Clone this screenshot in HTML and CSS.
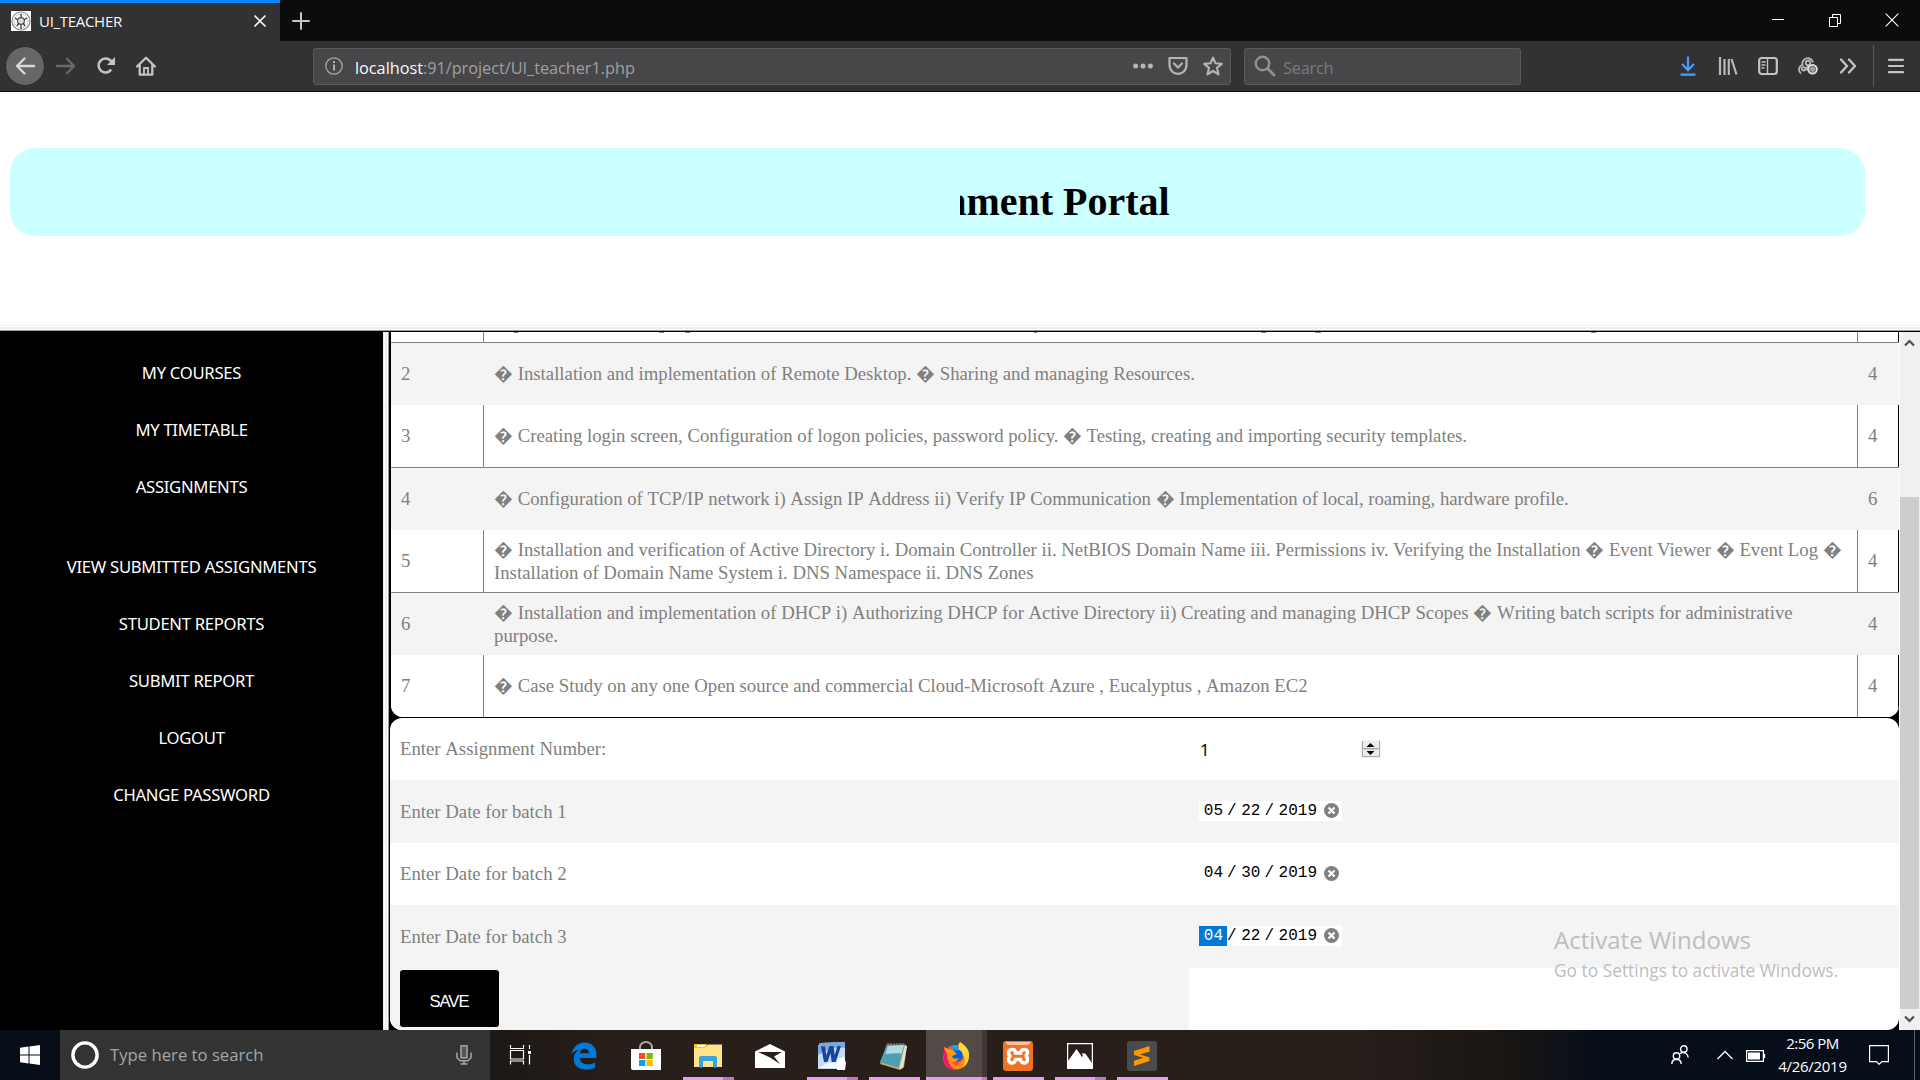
FILE: index.html
```html
<!DOCTYPE html>
<html lang="en">
<head>
<meta charset="utf-8">
<title>UI_TEACHER</title>
<link rel="stylesheet" href="styles.css">
</head>
<body>
<header class="tabs">
  <div class="tab">
    <svg class="favicon" width="20" height="20" viewBox="0 0 20 20"><rect width="20" height="20" fill="#fff"/><circle cx="10" cy="10" r="9" fill="none" stroke="#888" stroke-width="1.2"/><circle cx="10" cy="10" r="7" fill="none" stroke="#aaa" stroke-dasharray="1.5 1"/><circle cx="10" cy="10" r="3.4" fill="#ddd" stroke="#555" stroke-width="1.2"/><path d="M10 3v4M4 7l3 2M16 7l-3 2M6 15l2-3M14 15l-2-3M10 14v4" stroke="#444" stroke-width="1.4"/></svg>
    <span class="tab-title">UI_TEACHER</span>
    <svg class="tab-close" width="14" height="14" viewBox="0 0 14 14"><path d="M1.5 1.5l11 11M12.500 1.500l-11 11" stroke="#f9f9fa" stroke-width="1.7"/></svg>
  </div>
  <svg class="tab-new" width="18" height="18" viewBox="0 0 18 18"><path d="M9 1v16M1 9h16" stroke="#c4c4c4" stroke-width="2" stroke-linecap="round"/></svg>
  <div class="win-buttons">
    <svg width="14" height="14" viewBox="0 0 14 14"><path d="M1 6.500h12" stroke="#fff"/></svg>
    <svg width="14" height="14" viewBox="0 0 14 14"><path d="M1.500 4.500h8v9h-8zM4.500 4.500v-3h8v9h-3" fill="none" stroke="#fff"/></svg>
    <svg width="14" height="14" viewBox="0 0 14 14"><path d="M.7.7l12.600 12.600M13.300.7L.7 13.300" stroke="#fff" stroke-width="1.100"/></svg>
  </div>
</header>

<nav class="toolbar">
  <div class="nav-icons">
    <span class="back"><svg width="22" height="20" viewBox="0 0 22 20"><path d="M20 10H3M10.500 2.500L3 10l7.500 7.500" fill="none" stroke="#d8d8d8" stroke-width="2.400" stroke-linecap="round" stroke-linejoin="round"/></svg></span>
    <svg width="20" height="20" viewBox="0 0 20 20"><path d="M1 10h17M11 2.800L18 10l-7 7.200" fill="none" stroke="#6b6b6d" stroke-width="2.300" stroke-linecap="round" stroke-linejoin="round"/></svg>
    <svg width="20" height="20" viewBox="0 0 20 20"><path d="M15.300 13.600A7 7 0 1 1 14.500 4.500L17 7" fill="none" stroke="#c4c4c5" stroke-width="2.500"/><path d="M19 1v8h-8z" fill="#c4c4c5"/></svg>
    <svg width="20" height="20" viewBox="0 0 20 20"><path d="M1 10.500L10 1.700l9 8.800M3.700 9v9.700h12.600V9" fill="none" stroke="#c4c4c5" stroke-width="2.300" stroke-linecap="round" stroke-linejoin="round"/><path d="M8 19v-7h4v7" fill="none" stroke="#c4c4c5" stroke-width="1.800"/></svg>
  </div>
  <div class="url">
    <svg width="20" height="20" viewBox="0 0 20 20"><circle cx="10" cy="10" r="8.200" fill="none" stroke="#a9a9aa" stroke-width="1.300"/><path d="M10 8.500v6M10 5v2" stroke="#b4b4b5" stroke-width="1.900"/></svg>
    <span class="url-text"><b>localhost</b>:91/project/UI_teacher1.php</span>
    <span class="url-actions">
      <svg width="20" height="20" viewBox="0 0 20 20"><g fill="#b5b5b6"><circle cx="2.600" cy="10" r="2.500"/><circle cx="10" cy="10" r="2.500"/><circle cx="17.400" cy="10" r="2.500"/></g></svg>
      <svg width="20" height="20" viewBox="0 0 20 20"><path d="M1.500 2h17v6.500c0 12.500-17 12.500-17 0z" fill="none" stroke="#b5b5b6" stroke-width="2.200" stroke-linejoin="round"/><path d="M6 7.500l4 4 4-4" fill="none" stroke="#b5b5b6" stroke-width="2.200" stroke-linecap="round"/></svg>
      <svg width="20" height="20" viewBox="0 0 20 20"><path d="M10 1.600l2.500 5.700 6.300.6-4.800 4 1.500 6.500L10 15l-5.500 3.400L6 11.900l-4.800-4 6.300-.6z" fill="none" stroke="#b5b5b6" stroke-width="2.100" stroke-linejoin="round"/></svg>
    </span>
  </div>
  <div class="search">
    <svg width="22" height="22" viewBox="0 0 22 22"><circle cx="8.500" cy="8.500" r="6.700" fill="none" stroke="#929293" stroke-width="2.400"/><path d="M13.500 13.500l6.500 6.500" stroke="#929293" stroke-width="2.800" stroke-linecap="round"/></svg>
    <span>Search</span>
  </div>
  <div class="tools">
    <svg width="20" height="20" viewBox="0 0 20 20"><path d="M10 .5v13M4 8l6 6.200L16 8M2.500 18.700h15" fill="none" stroke="#45a1ff" stroke-width="2.200"/></svg>
    <svg width="20" height="20" viewBox="0 0 20 20"><path d="M2 1v18M6.500 3v16M10.800 3v16M13.500 3l5 15.500" fill="none" stroke="#b9b9ba" stroke-width="2.200"/></svg>
    <svg width="20" height="20" viewBox="0 0 20 20"><rect x="1.200" y="2" width="17.600" height="16" rx="2.500" fill="none" stroke="#c4c4c5" stroke-width="2.200"/><path d="M9.500 2v16M3.500 6h4M3.500 9h4M3.500 12h3" stroke="#c4c4c5" stroke-width="1.400"/></svg>
    <svg width="20" height="20" viewBox="0 0 20 20"><g fill="none" stroke="#b4b4b5" stroke-width="1.900"><path d="M3 17.500a5 5 0 0 1 1.500-8.700A5.300 5.300 0 0 1 15 6.500"/><circle cx="10" cy="7" r="2.200"/><circle cx="5.500" cy="12.800" r="1.700"/><path d="M8.500 14.500q-.5-3.500 2.500-4"/></g><circle cx="14.500" cy="13.300" r="4.400" fill="#777" stroke="#e4e4e4" stroke-width="1.800"/><circle cx="14.500" cy="13.300" r="1.500" fill="none" stroke="#ddd"/></svg>
    <svg width="20" height="20" viewBox="0 0 20 20"><path d="M3 3.500l6 6.500-6 6.500M11 3.500l6 6.500-6 6.500" fill="none" stroke="#c4c4c5" stroke-width="2.300" stroke-linecap="round" stroke-linejoin="round"/></svg>
    <i class="tool-sep"></i>
    <svg width="20" height="20" viewBox="0 0 20 20"><path d="M3 3.800h14M3 10h14M3 16.200h14" stroke="#c4c4c5" stroke-width="2.200" stroke-linecap="round"/></svg>
  </div>
</nav>

<section class="top-frame">
  <div class="banner"><div class="marquee"><h1>Assignment Portal</h1></div></div>
</section>
<div class="frame-divider"></div>

<main class="frames">
  <aside class="menu">
    <a>MY COURSES</a>
    <a>MY TIMETABLE</a>
    <a>ASSIGNMENTS</a>
    <a class="menu-gap">VIEW SUBMITTED ASSIGNMENTS</a>
    <a>STUDENT REPORTS</a>
    <a>SUBMIT REPORT</a>
    <a>LOGOUT</a>
    <a>CHANGE PASSWORD</a>
  </aside>
  <div class="frame-split"></div>
  <div class="content">
    <div class="list">
      <div class="row cut"><span></span><span class="peek"><svg width="1200" height="2" viewBox="494 0 1200 2"><path d="M513.500.5h5M659 .5h5M685 .5h5M1034 .5h3M1261 .5h5M1315 .5h6M1591 .5h5" stroke="#8a8a8a"/></svg></span><span></span></div>
      <div class="row alt"><span>2</span><span>� Installation and implementation of Remote Desktop. � Sharing and managing Resources.</span><span>4</span></div>
      <div class="row kern"><span>3</span><span>� Creating login screen, Configuration of logon policies, password policy. � Testing, creating and importing security templates.</span><span>4</span></div>
      <div class="row alt tight"><span>4</span><span>� Configuration of TCP/IP network i) Assign IP Address ii) Verify IP Communication � Implementation of local, roaming, hardware profile.</span><span>6</span></div>
      <div class="row kern"><span>5</span><span>� Installation and verification of Active Directory i. Domain Controller ii. NetBIOS Domain Name iii. Permissions iv. Verifying the Installation � Event Viewer � Event Log �<br>Installation of Domain Name System i. DNS Namespace ii. DNS Zones</span><span>4</span></div>
      <div class="row alt"><span>6</span><span>� Installation and implementation of DHCP i) Authorizing DHCP for Active Directory ii) Creating and managing DHCP Scopes � Writing batch scripts for administrative<br>purpose.</span><span>4</span></div>
      <div class="row last"><span>7</span><span>� Case Study on any one Open source and commercial Cloud-Microsoft Azure , Eucalyptus , Amazon EC2</span><span>4</span></div>
    </div>
    <div class="form">
      <div class="field"><label>Enter Assignment Number:</label>
        <div class="number"><span>1</span>
          <svg width="20" height="18" viewBox="0 0 20 18"><rect width="20" height="18" fill="#f0f0f0"/><path d="M1.500 1v7.500h17V1M1.500 10v6.500h17V10" fill="#ececec" stroke="#a8a8a8"/><path d="M1 9h18" stroke="#a8a8a8"/><path d="M5.500 7l4-4 4 4zM5.500 11h8l-4 4z" fill="#000"/></svg></div></div>
      <div class="field alt"><label>Enter Date for batch 1</label>
        <div class="date"><b>05</b><i>/</i><b>22</b><i>/</i><b>2019</b><svg width="15" height="15" viewBox="0 0 15 15"><circle cx="7.500" cy="7.500" r="7.500" fill="#808080"/><path d="M4.500 4.500l6 6M10.500 4.500l-6 6" stroke="#fff" stroke-width="2.200"/></svg></div></div>
      <div class="field"><label>Enter Date for batch 2</label>
        <div class="date"><b>04</b><i>/</i><b>30</b><i>/</i><b>2019</b><svg width="15" height="15" viewBox="0 0 15 15"><circle cx="7.500" cy="7.500" r="7.500" fill="#808080"/><path d="M4.500 4.500l6 6M10.500 4.500l-6 6" stroke="#fff" stroke-width="2.200"/></svg></div></div>
      <div class="field alt"><label>Enter Date for batch 3</label>
        <div class="date"><b class="selected">04</b><i>/</i><b>22</b><i>/</i><b>2019</b><svg width="15" height="15" viewBox="0 0 15 15"><circle cx="7.500" cy="7.500" r="7.500" fill="#808080"/><path d="M4.500 4.500l6 6M10.500 4.500l-6 6" stroke="#fff" stroke-width="2.200"/></svg></div></div>
      <div class="actions"><div class="save-cell"><button class="save">SAVE</button></div></div>
    </div>
  </div>
  <div class="scrollbar">
    <svg width="20" height="21" viewBox="0 0 20 21"><path d="M5 13.500L9.500 9l4.500 4.500" fill="none" stroke="#505050" stroke-width="2.200"/></svg>
    <div class="thumb"></div>
    <svg width="20" height="21" viewBox="0 0 20 21"><path d="M5 7.500L9.500 12 14 7.500" fill="none" stroke="#505050" stroke-width="2.200"/></svg>
  </div>
</main>

<div class="watermark"><p class="wm-title">Activate Windows</p><p class="wm-sub">Go to Settings to activate Windows.</p></div>

<footer class="taskbar">
  <div class="start"><svg width="20" height="20" viewBox="0 0 20 20"><path d="M0 2.800L8.500 1.600V9.500H0zM9.500 1.400L20 0v9.500H9.500zM0 10.500h8.500v7.900L0 17.200zM9.500 10.500H20V20L9.500 18.600z" fill="#fff"/></svg></div>
  <div class="cortana">
    <svg width="28" height="28" viewBox="0 0 28 28"><circle cx="14" cy="14" r="12.100" fill="none" stroke="#fff" stroke-width="3.400"/></svg>
    <span>Type here to search</span>
    <svg width="16" height="20" viewBox="0 0 16 20"><rect x="5" y=".8" width="6" height="12" fill="#555" stroke="#a8a8a8" stroke-width="1.500"/><path d="M1 7.500v5.300l3 3h8l3-3V7.500M8 16v3M4.500 19h7" fill="none" stroke="#a8a8a8" stroke-width="1.500"/></svg>
  </div>
  <div class="apps">
    <div class="app taskview"><svg width="24" height="22" viewBox="0 0 24 22"><path d="M1.500 1v3.500h13V1M1.500 20.500V17h13v3.500M1.500 6.500h13v8.500h-13zM20.500 1v4M20.500 11v9.500" fill="none" stroke="#fff" stroke-width="1.200"/><path d="M19 7h3v3h-3z" fill="#fff"/></svg></div>
    <div class="app"><svg width="26" height="28" viewBox="0 0 26 28"><path d="M.5 12.500C1.500 5.500 6.500.5 13.500.5c8 0 12 5.500 12 12.500v3H8.700c.3 4.500 4 6.300 8 6.300 3 0 5.200-.7 7.300-1.900v5.300c-2.500 1.300-5.500 2-8.800 2C7.500 27.700 2.700 23.500 2.700 16.800c0-4 2-7.300 5.800-9.300C4.500 8 2 10 .5 12.500zM8.900 11.300h9c0-3-1.500-4.600-4.300-4.600-2.700 0-4.300 1.800-4.700 4.600z" fill="#0078d7"/></svg></div>
    <div class="app"><svg width="30" height="30" viewBox="0 0 30 30"><path d="M9 9V6a6 5 0 0 1 12 0v3" fill="none" stroke="#aaa" stroke-width="2"/><path d="M0 8h30v21H2q-2 0-2-2z" fill="#fff"/><path d="M8 12h6.300v6H8z" fill="#f25022"/><path d="M15.500 12h6.300v6h-6.300z" fill="#7fba00"/><path d="M8 19h6.300v6H8z" fill="#00a4ef"/><path d="M15.500 19h6.300v6h-6.300z" fill="#ffb900"/></svg></div>
    <div class="app open stack"><svg width="28" height="24" viewBox="0 0 28 24"><path d="M0 0h13v5H0z" fill="#f8bc33"/><path d="M3 1h8v2H3z" fill="#fff"/><path d="M0 4h11l3-3.500h14V23H0z" fill="#ffe48c"/><path d="M5 23.500V14q0-2 2-2h14q2 0 2 2v9.500h-4V17H9v6.500z" fill="#35a7dd"/></svg></div>
    <div class="app"><svg width="30" height="24" viewBox="0 0 30 24"><path d="M0 7.500L15 0l15 7.500V24H0z" fill="#fff"/><path d="M3 8h24l-8 4.500 6 7.500-10-6.500z" fill="#281f1b"/></svg></div>
    <div class="app open stack"><svg width="30" height="28" viewBox="0 0 30 28"><path d="M3 1L28 0v27H1V4z" fill="#c7dcf3"/><path d="M3 1L28 0v6C17 5 9 8 1 13V4z" fill="#7fa6dd"/><path d="M4 4.500l4-.3 1.200 9L12.500 4h4l1.200 9L20.500 4H24l-5.300 16h-4l-1.200-8.500L10.500 20H7z" fill="#1746a0"/><path d="M20 17l7-2 2 6-1 7h-8z" fill="#fff"/><path d="M2 26l8-5 10-1v6z" fill="#f4f8fe"/></svg></div>
    <div class="app open"><svg width="30" height="28" viewBox="0 0 30 28"><path d="M8 2L28 4l-3 21-4 3L1 22z" fill="#b9a878"/><path d="M8 3L26 2 20 26 1 20z" fill="#57a6b5"/><path d="M9 4L25 3l-3 10L6 13z" fill="#b4dbe2"/><path d="M5 12l17-1-3 14L2 20z" fill="#4e9fb0"/><path d="M26 3l2 1-4 22-4 1z" fill="#e8dfc9"/><path d="M8 2h18" stroke="#666" stroke-width="2" stroke-dasharray="2 1"/></svg></div>
    <div class="app open active"><svg width="28" height="28" viewBox="0 0 28 28"><circle cx="13.500" cy="15" r="12" fill="#ff4f3b"/><path d="M1.500 13Q0 27 13 27.500 27 27 27 13C27 7 24 5 18 0c-3 3-2 6-3 9l8 7-9 8z" fill="#ff8a16"/><path d="M18 0c6 4 9 8 9 13 0 5-2 9-6 12 3-6 2-11-2-14-3-3-3-7-1-11z" fill="#ffd93b"/><circle cx="14.500" cy="13.500" r="6.300" fill="#0060df"/><path d="M8 5q5-4 9 0l-2 4z" fill="#00a9f4"/><path d="M2 5l4 2 5 1 4 4-5 2q1 4 7 2-3 6-9 3Q1 14 2 5z" fill="#ff980e"/><path d="M1.500 13Q0 27 13 27.500 5 23 5 12L2 6z" fill="#f5156c"/></svg></div>
    <div class="app open"><svg width="30" height="30" viewBox="0 0 30 30"><rect width="30" height="30" rx="3" fill="#ef7225"/><path d="M2 1h26l-3 3H5z" fill="#ffc09a"/><path d="M9.500 8.500c2.500 0 3 2 3 3.500h5c0-1.500.5-3.500 3.500-3.500s3.500 1.500 3.500 3-1 3.500-3 3.500c2 0 3 1.500 3 3.500s-1.500 3.500-3.500 3.500-3.500-2-3.500-3.500h-5c0 1.500-1 3.500-3.500 3.500s-3.500-1.500-3.500-3.500 1-3.500 3-3.500c-2 0-3-1.500-3-3.500s1.500-3 4-3z" fill="none" stroke="#fff" stroke-width="3.400"/></svg></div>
    <div class="app open stack"><svg width="26" height="26" viewBox="0 0 26 26"><path d="M.6.6h24.800v24.800H.6z" fill="#281f1b" stroke="#fff" stroke-width="1.300"/><path d="M1 18L9.500 6l5.500 8 3-3.500 7 9.500v5H1z" fill="#fff"/><path d="M14.500 10.500L17 14l4 4 1-2-4-5.500z" fill="#fff"/></svg></div>
    <div class="app open"><svg width="30" height="30" viewBox="0 0 30 30"><rect width="30" height="30" rx="3" fill="#4b4b4b"/><path d="M7 10L22.500 5v5.500L13 13.500l9.500 3V20L7 25v-5.300l9.500-3L7 14z" fill="#ff9800"/></svg></div>
  </div>
  <div class="tray">
    <svg class="people" width="18" height="20" viewBox="0 0 18 20"><g fill="none" stroke="#fff" stroke-width="1.400"><circle cx="12.800" cy="4" r="3.200"/><circle cx="5.500" cy="11" r="3.200"/><path d="M.8 19q0-4.500 4.700-4.800 4.700.3 4.700 4.800M9 8.500q3.500-2 6 0 2 1.500 2.200 4"/></g></svg>
    <svg class="chev" width="16" height="10" viewBox="0 0 16 10"><path d="M.5 9L8 1.500 15.500 9" fill="none" stroke="#fff" stroke-width="1.300"/></svg>
    <svg class="batt" width="20" height="12" viewBox="0 0 20 12"><path d="M.6.6h16.800v10.800H.6zM18.500 4v4" fill="none" stroke="#fff" stroke-width="1.300"/><path d="M2 2.500h12v7H2z" fill="#fff"/></svg>
    <div class="clock"><span class="time">2:56 PM</span><span class="day">4/26/2019</span></div>
    <svg class="note" width="20" height="20" viewBox="0 0 20 20"><path d="M.6.600h18.800v16h-6.500L10 19.300 7.500 16.600H.6z" fill="none" stroke="#fff" stroke-width="1.200"/></svg>
    <i class="desk"></i>
  </div>
</footer>
</body>
</html>
```
FILE: styles.css
```css
* { box-sizing: border-box; }
body {
  margin: 0;
  width: 1920px;
  height: 1080px;
  overflow: hidden;
  display: flex;
  flex-direction: column;
  background: #fff;
  font-family: "Open Sans", sans-serif;
}
svg { display: block; flex: none; }

/* browser chrome */
.tabs { height: 41px; flex: none; display: flex; align-items: center; background: #0c0c0c; }
.tab { width: 280px; height: 41px; display: flex; align-items: center; border-top: 3px solid #0a84ff; background: #323234; padding: 0 13px 3px 11px; }
.tab-title { margin-left: 8px; flex: 1; color: #f9f9fa; font-size: 15px; letter-spacing: -0.3px; line-height: 20px; }
.tab-new { margin-left: 12px; }
.win-buttons { margin-left: auto; margin-right: 21px; padding-bottom: 1px; display: flex; gap: 43px; }
.toolbar { height: 51px; flex: none; display: flex; align-items: center; background: #323234; border-bottom: 1px solid #0c0c0c; }
.nav-icons { width: 313px; padding-left: 5px; display: flex; align-items: center; gap: 20px; }
.back { width: 40px; height: 40px; margin-right: -9px; border-radius: 50%; background: #666667; border: 1px solid #28282a; display: flex; align-items: center; justify-content: center; }
.url, .search { height: 37px; border: 1px solid #5b5b5d; border-radius: 3px; background: #474749; display: flex; align-items: center; }
.url { width: 918px; padding: 0 7px 0 10px; }
.url-text { margin-left: 11px; flex: 1; color: #a0a0a2; font-size: 16.300px; line-height: 22px; padding-top: 4px; letter-spacing: -0.030px; }
.url-text b { color: #f9f9fa; font-weight: 400; }
.url-actions { display: flex; gap: 15px; }
.search { margin-left: 13px; width: 277px; padding-left: 9px; color: #7c7c7e; font-size: 16.300px; line-height: 22px; }
.search span { margin-left: 7px; padding-top: 4px; letter-spacing: -0.2px; }
.tools { margin-left: auto; padding-right: 14px; display: flex; align-items: center; gap: 20px; }
.tool-sep { width: 1px; height: 42px; background: #59595b; margin: 0 -8px 0 -5px; }

/* top frame */
.top-frame { height: 233px; flex: none; padding: 56px 55px 0 10px; }
.banner { height: 88px; border-radius: 25px; background: #ccffff; padding-left: 950px; }
.marquee { height: 88px; width: 800px; overflow: hidden; display: flex; }
.marquee h1 { margin: 31px 0 0 -107px; font: bold 40px/46px "Liberation Serif", serif; color: #000; white-space: nowrap; }
.frame-divider { height: 7px; flex: none; background: linear-gradient(#eee 0 1px, #fff 1px 2px, #eee 2px 4px, #fff 4px 5px, #999 5px 6px, #000 6px 7px); }

/* lower frames */
.frames { height: 698px; flex: none; display: flex; }
.menu { width: 383px; background: #000; padding-top: 12px; display: flex; flex-direction: column; }
.menu a { height: 57px; line-height: 57px; text-align: center; color: #fff; font-family: "Noto Sans", sans-serif; font-size: 16.670px; letter-spacing: -0.290px; white-space: nowrap; }
.menu .menu-gap { margin-top: 23px; }
.frame-split { width: 6px; background: linear-gradient(90deg, #eee 0 1px, #fff 1px 2px, #eee 2px 4px, #fff 4px 5px, #999 5px 6px); }
.content { width: 1510px; background: #000; font-family: "Liberation Serif", serif; font-size: 18.750px; line-height: 23px; color: #808080; font-kerning: none; }
.list { margin-left: 2px; height: 385px; border-radius: 0 0 12px 12px; overflow: hidden; background: #fff; }
.row { height: 63px; display: grid; grid-template-columns: 93px 1374px 41px; border-bottom: 1px solid #808080; background: #fff; }
.row > span { padding: 0 0 1px 10px; border-right: 1px solid #808080; display: flow-root; align-content: center; white-space: nowrap; }
.row > span:last-child { border-right-color: #000; }
.row.alt { height: 62px; border-bottom: 0; background: #f4f4f4; }
.row.alt > span { border-right-color: transparent; }
.row.kern { font-kerning: normal; }
.row.tight { letter-spacing: -0.020px; }
.row.cut { height: 11px; }
.row.cut > .peek { align-content: start; }
.row.last { height: 62px; border-bottom: 0; }
.form { margin: 1px 0 0 1px; height: 312px; border-radius: 12px; overflow: hidden; background: #fff; }
.field { height: 62px; display: grid; grid-template-columns: 799px 1fr; align-items: center; padding-left: 10px; }
.field label { padding-bottom: 1px; }
.field:nth-child(2), .field:nth-child(4) { height: 63px; }
.alt { background: #f4f4f4; }
.number { height: 23px; width: 182px; padding-left: 1px; display: flex; align-items: center; color: #000; font: 16.670px/23px "Noto Sans", sans-serif; }
.number span { flex: 1; }
.date { width: 143px; height: 20px; margin-bottom: 2px; background: #fff; display: flex; align-items: center; color: #000; font: 16px/20px "Liberation Mono", monospace; }
.date b, .date i { font-weight: 400; font-style: normal; line-height: 20px; height: 20px; }
.date b { padding: 0 4px 0 4.800px; }
.date i { width: 9.400px; }
.date .selected { background: #0078d7; color: #fff; }
.date svg { margin-left: auto; margin-right: 3px; }
.actions { height: 62px; }
.save-cell { width: 799px; height: 62px; padding: 2px 0 0 10px; background: #f4f4f4; }
.save { display: block; width: 99px; height: 57px; border: 0; border-radius: 3px; background: #000; color: #fff; font: 16.670px/23px "Liberation Sans", sans-serif; letter-spacing: -1px; padding: 5px 1px 0 0; }
.scrollbar { width: 21px; border-left: 1px solid #fff; background: #f0f0f0; }
.thumb { width: 19px; height: 512px; margin-top: 144px; background: #cdcdcd; }

/* activation notice lies over the page */
.watermark { position: absolute; left: 1554px; top: 920px; color: #bdbdbd; white-space: nowrap; }
.watermark p { margin: 0; }
.wm-title { font-size: 24px; line-height: 40px; }
.wm-sub { font-size: 17.350px; line-height: 20px; }

/* taskbar */
.taskbar { height: 50px; flex: none; display: flex; background: linear-gradient(90deg, #080e18 0 60px, #1c1815 490px, #281f1b 620px, #281f1b 1350px, #1a1613 1500px, #060e1a 1600px); }
.start { width: 60px; display: flex; align-items: center; justify-content: center; }
.cortana { width: 430px; background: #333; display: flex; align-items: center; padding: 0 18px 0 11px; }
.cortana span { flex: 1; margin-left: 11px; color: #a6a6a6; font-size: 16.700px; line-height: 24px; }
.apps { margin-left: 1px; display: flex; }
.app { width: 62px; height: 50px; display: grid; place-items: center; padding-top: 1px; }
.taskview { padding: 0 3px 1px 0; }
.open { background: linear-gradient(#e79cf0, #e79cf0) 6px 47px / 51px 3px no-repeat; }
.open.stack { background: linear-gradient(90deg, #e79cf0 0 40px, #b67bbd 40px) 6px 47px / 51px 3px no-repeat; }
.open.active { background: linear-gradient(90deg, #e79cf0 0 56px, #b67bbd 56px) 1px 47px / 61px 3px no-repeat, linear-gradient(90deg, #534a47 0 56px, #3f3734 56px) 1px 0 / 61px 50px no-repeat; }
.tray { margin-left: auto; display: flex; align-items: center; color: #fff; }
.people { margin-right: 28px; }
.chev { margin-right: 13px; }
.batt { margin: 2px 12px 0 0; }
.clock { width: 69px; text-align: center; font-size: 15px; display: flex; flex-direction: column; line-height: 23px; letter-spacing: -0.5px; white-space: nowrap; }
.day { letter-spacing: -0.3px; }
.note { margin-left: 22px; }
.desk { width: 1px; height: 50px; margin: 0 5px 0 25px; background: #596069; }
```
